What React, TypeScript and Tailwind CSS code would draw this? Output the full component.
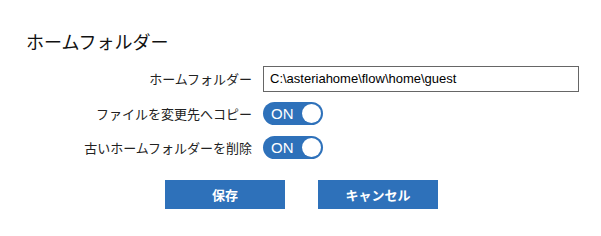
import React from "react";

const jp = { fontFamily: '"Noto Sans CJK JP", "Noto Sans", sans-serif' };

function Toggle() {
  return (
    <div className="flex h-[23px] w-[60px] items-center justify-between rounded-full bg-[#2e71ba] pl-[8px] pr-[2px]">
      <span className="text-[15px] leading-none text-white" style={{ fontFamily: '"Liberation Sans", Arial, sans-serif' }}>
        ON
      </span>
      <span className="h-[19px] w-[19px] rounded-full bg-white" />
    </div>
  );
}

export default function App() {
  return (
    <div className="w-[601px] h-[236px] bg-white text-[#222]" style={jp}>
      <div className="pl-[26px] pt-[28px]">
        <h1 className="text-[18px] leading-[26px] font-normal text-[#111]">ホームフォルダー</h1>
        <div className="mt-[12px] flex flex-col gap-[9px]">
          <div className="flex items-center h-[26px]">
            <div className="w-[226px] text-right text-[13px]">ホームフォルダー</div>
            <div className="ml-[11px] h-[26px] w-[316px] border border-[#666] px-[6px] flex items-center text-[13px] text-black" style={{ fontFamily: '"Liberation Sans", Arial, sans-serif' }}>
              C:\asteriahome\flow\home\guest
            </div>
          </div>
          <div className="flex items-center h-[25px]">
            <div className="w-[226px] text-right text-[13px]">ファイルを変更先へコピー</div>
            <div className="ml-[11px]"><Toggle /></div>
          </div>
          <div className="flex items-center h-[25px]">
            <div className="w-[226px] text-right text-[13px]">古いホームフォルダーを削除</div>
            <div className="ml-[11px]"><Toggle /></div>
          </div>
        </div>
        <div className="mt-[20px] flex gap-[33px] pl-[139px]">
          <button className="h-[29px] w-[120px] bg-[#2e71ba] text-white text-[13px] font-bold">保存</button>
          <button className="h-[29px] w-[120px] bg-[#2e71ba] text-white text-[13px] font-bold">キャンセル</button>
        </div>
      </div>
    </div>
  );
}
